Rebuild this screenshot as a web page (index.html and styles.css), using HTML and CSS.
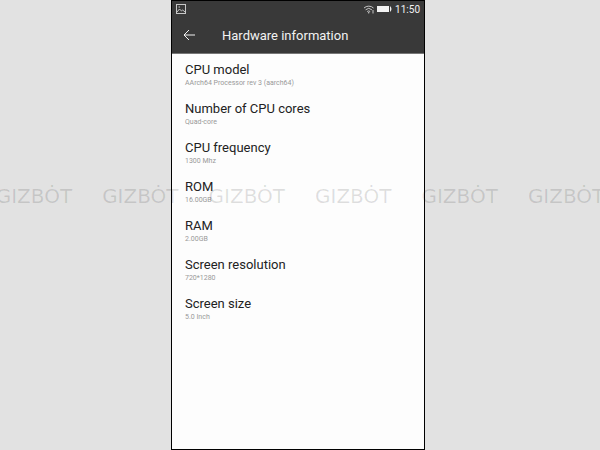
FILE: index.html
```html
<!DOCTYPE html>
<html lang="en">
<head>
    <meta charset="UTF-8">
    <meta name="viewport" content="width=device-width, initial-scale=1.0">
    <title>Hardware information</title>
    <link rel="stylesheet" href="styles.css">
</head>

<body>
    <main class="phone">
        <!-- Top bars -->
        <header class="top">
            <div class="status-bar">
                <svg class="picture-icon" width="10" height="10" viewBox="0 0 10 10">
                    <rect x="0.5" y="0.5" width="9" height="9" />
                    <path d="M1 8l2.5-3 2 2 1.2-1L9 8M2.5 3h1.5" />
                </svg>
                <div class="status-right">
                    <svg class="wifi-icon" width="12" height="10" viewBox="0 0 12 10">
                        <path d="M1 4a7 7 0 0 1 9.500 0M2.600 5.800a4.600 4.600 0 0 1 6.300 0M4.200 7.500a2.400 2.400 0 0 1 3 0" />
                        <circle cx="5.700" cy="8.800" r="0.800" />
                        <path d="M10 6v3.500" />
                    </svg>
                    <svg class="battery-icon" width="15" height="8" viewBox="0 0 15 8">
                        <path d="M0 1h12v6H0zM13 1q3 3 0 6z" />
                    </svg>
                    <span>11:50</span>
                </div>
            </div>
            <div class="title-bar">
                <button type="button" class="back" aria-label="Back">
                    <svg width="12" height="12" viewBox="0 0 12 12">
                        <path d="M12 6H1M6 1L1 6l5 5" />
                    </svg>
                </button>
                <h1>Hardware information</h1>
            </div>
        </header>

        <!-- Hardware details -->
        <dl class="specs">
            <div class="spec">
                <dt>CPU model</dt>
                <dd>AArch64 Processor rev 3 (aarch64)</dd>
            </div>
            <div class="spec">
                <dt>Number of CPU cores</dt>
                <dd>Quad-core</dd>
            </div>
            <div class="spec">
                <dt>CPU frequency</dt>
                <dd>1300 Mhz</dd>
            </div>
            <div class="spec">
                <dt>ROM</dt>
                <dd>16.00GB</dd>
            </div>
            <div class="spec">
                <dt>RAM</dt>
                <dd>2.00GB</dd>
            </div>
            <div class="spec">
                <dt>Screen resolution</dt>
                <dd>720*1280</dd>
            </div>
            <div class="spec">
                <dt>Screen size</dt>
                <dd>5.0 Inch</dd>
            </div>
        </dl>
    </main>

    <!-- Watermark strip over the whole page -->
    <div class="watermark">
        <span>GIZBȮT</span>
        <span>GIZBȮT</span>
        <span>GIZBȮT</span>
        <span>GIZBȮT</span>
        <span>GIZBȮT</span>
        <span>GIZBȮT</span>
    </div>
</body>

</html>
```

FILE: styles.css
```css
* {
    box-sizing: border-box;
}

/* Grey page with the phone screen in the middle column */
body {
    display: grid;
    grid-template-columns: 171fr 254fr 175fr;
    min-height: 100vh;
    margin: 0;
    background-color: #e2e2e2;
    font-family: Roboto, "Liberation Sans", sans-serif;
}

.phone {
    grid-column: 2;
    border: 1px solid #000;
    background-color: #fdfdfd;
}

/* Status bar and title bar */
.top {
    background-color: #393939;
    border-bottom: 1px solid #777;
    color: #f2f2f2;
}

.status-bar {
    display: flex;
    justify-content: space-between;
    align-items: center;
    height: 16px;
    padding: 0 4px;
    font-size: 10px;
}

.status-right {
    display: flex;
    align-items: center;
    gap: 2px;
}

.status-right span {
    padding-left: 1px;
}

.top svg {
    display: block;
    fill: none;
    stroke: currentColor;
}

.top .picture-icon,
.top .wifi-icon {
    color: #c8c8c8;
}

.top .battery-icon,
.top circle {
    fill: currentColor;
    stroke: none;
}

.title-bar {
    display: flex;
    align-items: center;
    gap: 27px;
    height: 36px;
    padding-left: 11px;
}

.back {
    padding: 0;
    border: none;
    background: none;
    color: inherit;
    cursor: pointer;
}

h1 {
    margin: 0;
    font-size: 13px;
    font-weight: 400;
}

/* List of name and value pairs */
.specs {
    display: flex;
    flex-direction: column;
    gap: 11px;
    margin: 0;
    padding: 7px 13px;
}

dt {
    color: #222;
    font-size: 13px;
    line-height: 17px;
}

dd {
    margin: 0;
    color: #999;
    font-size: 7px;
    line-height: 11px;
}

/* Repeated watermark, runs off both edges */
.watermark {
    position: absolute;
    top: 182px;
    left: 0;
    right: 0;
    display: flex;
    justify-content: center;
    gap: 30px;
    overflow: hidden;
    color: rgba(0, 0, 0, 0.12);
    font-family: "DejaVu Sans", sans-serif;
    font-size: 20px;
    line-height: 28px;
    pointer-events: none;
}
```
